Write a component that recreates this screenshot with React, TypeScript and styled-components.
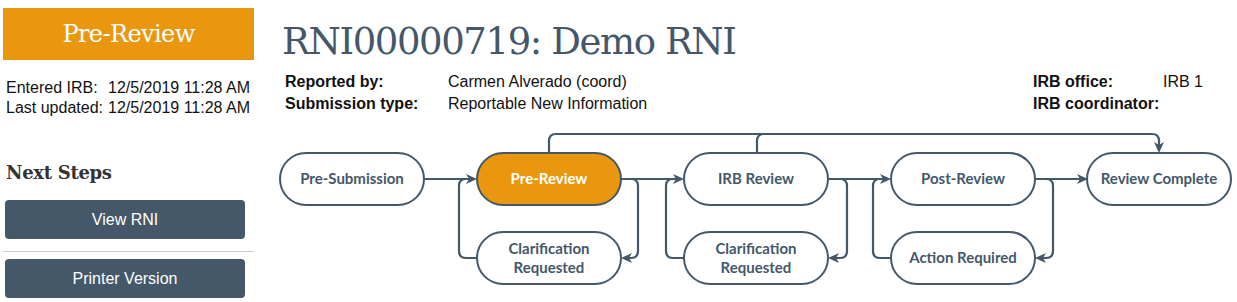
import * as React from "react";
import styled, { createGlobalStyle } from "styled-components";

const slate = "#44586a";
const orange = "#e8970e";

const GlobalStyle = createGlobalStyle`
  body {
    margin: 0;
    background: #fff;
    font-family: "Liberation Sans", Arial, sans-serif;
  }
`;

type Step = {
  label: string[];
  x: number;
  y: number;
  active?: boolean;
};

const nodeWidth = 144;
const nodeHeight = 52;

const steps: Array<Step> = [
  { label: ["Pre-Submission"], x: 280, y: 153 },
  { label: ["Pre-Review"], x: 477, y: 153, active: true },
  { label: ["Clarification", "Requested"], x: 477, y: 232 },
  { label: ["IRB Review"], x: 684, y: 153 },
  { label: ["Clarification", "Requested"], x: 684, y: 232 },
  { label: ["Post-Review"], x: 891, y: 153 },
  { label: ["Action Required"], x: 891, y: 232 },
  { label: ["Review Complete"], x: 1087, y: 153 },
];

// connector paths, drawn in page coordinates
const links = [
  "M425 179 H469",
  "M477 258 H466 Q459 258 459 251 V186 Q459 179 466 179 H469",
  "M621 179 H676",
  "M621 179 H631 Q638 179 638 186 V251 Q638 258 631 258 H629",
  "M684 258 H673 Q666 258 666 251 V186 Q666 179 673 179 H676",
  "M828 179 H883",
  "M828 179 H840 Q847 179 847 186 V251 Q847 258 840 258 H836",
  "M891 258 H880 Q873 258 873 251 V186 Q873 179 880 179 H883",
  "M1035 179 H1080",
  "M1035 179 H1046 Q1053 179 1053 186 V251 Q1053 258 1046 258 H1042",
  "M549 153 V141 Q549 134 556 134 H1152 Q1159 134 1159 141 V145",
  "M757 153 V141 Q757 134 764 134",
];

type Arrow = { x: number; y: number; dir: "right" | "left" | "down" };

const arrows: Array<Arrow> = [
  { x: 477, y: 179, dir: "right" },
  { x: 684, y: 179, dir: "right" },
  { x: 891, y: 179, dir: "right" },
  { x: 1088, y: 179, dir: "right" },
  { x: 621, y: 258, dir: "left" },
  { x: 828, y: 258, dir: "left" },
  { x: 1035, y: 258, dir: "left" },
  { x: 1159, y: 153, dir: "down" },
];

const arrowPoints = ({ x, y, dir }: Arrow) => {
  if (dir === "right") {
    return `${x},${y} ${x - 11},${y - 5} ${x - 8},${y} ${x - 11},${y + 5}`;
  }
  if (dir === "left") {
    return `${x},${y} ${x + 11},${y - 5} ${x + 8},${y} ${x + 11},${y + 5}`;
  }
  return `${x},${y} ${x - 5},${y - 11} ${x},${y - 8} ${x + 5},${y - 11}`;
};

function App() {
  return (
    <>
      <GlobalStyle />
      <Page>
        <Sidebar>
          <StatusBanner>Pre-Review</StatusBanner>
          <DateGrid>
            <span>Entered IRB:</span>
            <span>12/5/2019 11:28 AM</span>
            <span>Last updated:</span>
            <span>12/5/2019 11:28 AM</span>
          </DateGrid>
          <SectionTitle>Next Steps</SectionTitle>
          <ActionButton>View RNI</ActionButton>
          <Divider />
          <ActionButton>Printer Version</ActionButton>
        </Sidebar>
        <Main>
          <Title>RNI00000719: Demo RNI</Title>
          <MetaRow>
            <MetaGrid $labelWidth={163}>
              <MetaLabel>Reported by:</MetaLabel>
              <MetaValue>Carmen Alverado (coord)</MetaValue>
              <MetaLabel>Submission type:</MetaLabel>
              <MetaValue>Reportable New Information</MetaValue>
            </MetaGrid>
            <MetaGrid $labelWidth={130} $width={204}>
              <MetaLabel>IRB office:</MetaLabel>
              <MetaValue>IRB 1</MetaValue>
              <MetaLabel>IRB coordinator:</MetaLabel>
              <MetaValue />
            </MetaGrid>
          </MetaRow>
          <Diagram viewBox="278 128 959 162" width={959} height={162}>
            {links.map((d, i) => (
              <Link key={i} d={d} />
            ))}
            {arrows.map((a, i) => (
              <ArrowHead key={i} points={arrowPoints(a)} />
            ))}
            {steps.map((step, i) => (
              <g key={i}>
                <NodeShape
                  x={step.x}
                  y={step.y}
                  width={nodeWidth}
                  height={nodeHeight}
                  rx={26}
                  $active={step.active}
                />
                {step.label.map((line, j) => (
                  <NodeText
                    key={j}
                    x={step.x + nodeWidth / 2}
                    y={
                      step.y +
                      nodeHeight / 2 +
                      (j - (step.label.length - 1) / 2) * 19 +
                      5
                    }
                    $active={step.active}
                  >
                    {line}
                  </NodeText>
                ))}
              </g>
            ))}
          </Diagram>
        </Main>
      </Page>
    </>
  );
}

export default App;

const Page = styled.div`
  display: flex;
  padding-left: 3px;
  width: 1237px;
  height: 302px;
  box-sizing: border-box;
  overflow: hidden;
`;

const Sidebar = styled.aside`
  display: flex;
  flex-direction: column;
  width: 251px;
  flex-shrink: 0;
  padding-top: 8px;
`;

const StatusBanner = styled.div`
  display: flex;
  align-items: center;
  justify-content: center;
  height: 52px;
  background-color: ${orange};
  color: #fff;
  font-family: "DejaVu Serif", "Liberation Serif", serif;
  font-size: 24px;
  letter-spacing: -0.6px;
`;

const DateGrid = styled.div`
  display: grid;
  grid-template-columns: 102px auto;
  margin: 18px 0 0 3px;
  font-size: 16px;
  line-height: 20px;
  color: #111;
`;

const SectionTitle = styled.h3`
  margin: 44px 0 0 3px;
  font-family: "DejaVu Serif", "Liberation Serif", serif;
  font-weight: 700;
  font-size: 18px;
  line-height: 22px;
  color: #333;
  letter-spacing: -0.3px;
`;

const ActionButton = styled.button`
  width: 240px;
  height: 39px;
  margin: 0 0 0 2px;
  border: 0;
  border-radius: 4px;
  background-color: ${slate};
  color: #fff;
  font-family: "Liberation Sans", Arial, sans-serif;
  font-size: 16px;

  ${SectionTitle} + & {
    margin-top: 16px;
  }
`;

const Divider = styled.hr`
  width: 100%;
  margin: 12px 0 7px 0;
  border: 0;
  border-top: 1px solid #cccccc;
`;

const Main = styled.main`
  display: flex;
  flex-direction: column;
  flex: 1;
  min-width: 0;
  padding-left: 28px;
`;

const Title = styled.h1`
  margin: 18px 0 0 0;
  font-family: "DejaVu Serif", "Liberation Serif", serif;
  font-weight: 400;
  font-size: 37px;
  line-height: 48px;
  letter-spacing: -1.4px;
  color: ${slate};
`;

const MetaRow = styled.div`
  display: flex;
  justify-content: space-between;
  margin-top: 5px;
  padding-left: 3px;
`;

const MetaGrid = styled.div<{ $labelWidth: number; $width?: number }>`
  display: grid;
  grid-template-columns: ${(p) => p.$labelWidth}px auto;
  width: ${(p) => (p.$width ? `${p.$width}px` : "auto")};
  font-size: 16px;
  line-height: 22px;
  color: #111;
`;

const MetaLabel = styled.span`
  font-weight: 700;
`;

const MetaValue = styled.span``;

const Diagram = styled.svg`
  display: block;
  margin: 13px 0 0 -4px;
  flex-shrink: 0;
`;

const Link = styled.path`
  fill: none;
  stroke: ${slate};
  stroke-width: 2.2;
`;

const ArrowHead = styled.polygon`
  fill: ${slate};
`;

const NodeShape = styled.rect<{ $active?: boolean }>`
  fill: ${(p) => (p.$active ? orange : "#fff")};
  stroke: ${slate};
  stroke-width: 2;
`;

const NodeText = styled.text<{ $active?: boolean }>`
  fill: ${(p) => (p.$active ? "#fff" : slate)};
  font-family: Lato, "Open Sans", sans-serif;
  font-weight: 700;
  font-size: 15px;
  text-anchor: middle;
`;
